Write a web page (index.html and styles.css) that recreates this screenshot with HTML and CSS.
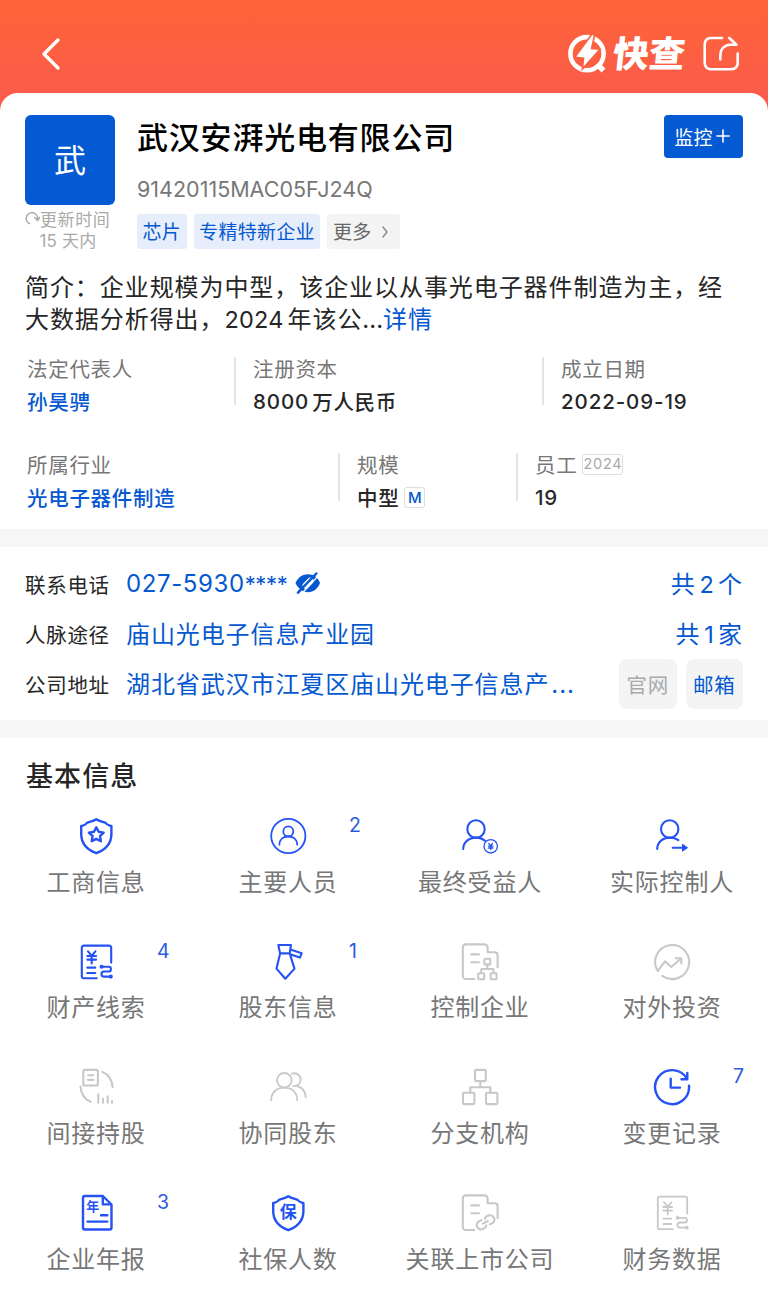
FILE: index.html
```html
<!DOCTYPE html>
<html lang="zh-CN">
<head>
    <meta charset="UTF-8">
    <meta name="viewport" content="width=device-width, initial-scale=1.0">
    <title>武汉安湃光电有限公司</title>
    <link rel="stylesheet" href="styles.css">
</head>
<body>
    <!-- shapes used more than once -->
    <svg class="defs" width="0" height="0">
        <symbol id="shield" viewBox="0 0 40 40">
            <path d="M20.3 3.2C17.5 5.2 14.5 5.6 11 6.8C9.5 9.6 8 9.2 5.2 9.9V18C5.2 27.5 10.5 33.5 20.3 37.2C30.1 33.5 35.4 27.5 35.4 18V9.9C32.6 9.2 31.1 9.6 29.6 6.8C26.1 5.6 23.1 5.2 20.3 3.2Z"/>
        </symbol>
        <symbol id="assets" viewBox="0 0 40 40">
            <path d="M35.2 20.6V5.6a2 2 0 0 0-2-2H7.8a2 2 0 0 0-2 2V34.2a2 2 0 0 0 2 2H20.7M11.3 25.6h8M11.3 31h8"/>
            <path d="M12 9.3l3.7 4.5l3.7-4.5M15.7 13.8V21.5M11.3 14h8.8M11.3 17.6h8.8"/>
            <path d="M25.5 24.8H32.6a2.3 2.3 0 0 1 0 4.7H28a2.5 2.5 0 0 0 0 5.1H35"/>
            <circle cx="25.6" cy="24.8" r="1"/>
            <circle cx="34.8" cy="34.6" r="1"/>
        </symbol>
        <symbol id="doc" viewBox="0 0 40 40">
            <path d="M14.3 37H5.8a3 3 0 0 1-3-3V5.4a3 3 0 0 1 3-3H24.6a3 3 0 0 1 3 3V10.3H34.6a3 3 0 0 1 3 3V25.3M11.3 12.4h7.6M11.3 20.3h7.6"/>
        </symbol>
    </svg>

    <header class="topbar">
        <svg class="back" viewBox="0 0 24 36" width="24" height="36"><path d="M19 4L5 18L19 32"/></svg>
        <div class="brand">
            <svg class="brand-mark" viewBox="0 0 42 42" width="42" height="42">
                <circle cx="20" cy="20.7" r="16.6"/>
                <path class="tail" d="M30 31L36.5 37.5"/>
                <path class="bolt" d="M25 1L7.8 24.3L16.6 25.2L15.4 36L33 16.3L24.6 15.5L27.6 2Z"/>
            </svg>
            <span class="brand-name">快查</span>
            <svg class="share" viewBox="0 0 38 38" width="38" height="38">
                <path d="M20 3H8.7a6 6 0 0 0-6 6V28.3a6 6 0 0 0 6 6H29.7a6 6 0 0 0 6-6V18.5"/>
                <path d="M18.3 24.5V21C18.3 14.5 22 10 28.5 9.7H34.5L27.3 3"/>
            </svg>
        </div>
    </header>

    <section class="company">
        <div class="company-head">
            <div class="logo-col">
                <div class="avatar">武</div>
                <div class="updated">
                    <svg viewBox="0 0 15 15" width="15" height="15"><path d="M4.6 12.6A5.7 5.7 0 1 1 12.6 7.6M9.8 6.6L12.6 9.6L14.6 6.4"/></svg>更新时间
                </div>
                <div class="updated days">15 天内</div>
            </div>
            <div class="name-col">
                <h1>武汉安湃光电有限公司</h1>
                <div class="code">91420115MAC05FJ24Q</div>
                <div class="tags">
                    <span class="tag">芯片</span>
                    <span class="tag">专精特新企业</span>
                    <span class="tag tag-more">更多<svg viewBox="0 0 8 14" width="8" height="14"><path d="M2 2L6 7L2 12"/></svg></span>
                </div>
            </div>
            <button type="button" class="monitor">监控<svg viewBox="0 0 14 14" width="14" height="14"><path d="M7 1v12M1 7h12"/></svg></button>
        </div>

        <p class="intro">简介：企业规模为中型，该企业以从事光电子器件制造为主，经<br>大数据分析得出，<span class="num">2024</span>年该公<span class="dots">...</span><a class="link">详情</a></p>

        <div class="facts facts-first">
            <div class="fact">
                <div class="label">法定代表人</div>
                <div class="value link">孙昊骋</div>
            </div>
            <div class="fact">
                <div class="label">注册资本</div>
                <div class="value"><span class="amount">8000</span>万人民币</div>
            </div>
            <div class="fact">
                <div class="label">成立日期</div>
                <div class="value date">2022-09-19</div>
            </div>
        </div>
        <div class="facts facts-second">
            <div class="fact">
                <div class="label">所属行业</div>
                <div class="value link">光电子器件制造</div>
            </div>
            <div class="fact">
                <div class="label">规模</div>
                <div class="value">中型<span class="mark size">M</span></div>
            </div>
            <div class="fact">
                <div class="label">员工<span class="mark year">2024</span></div>
                <div class="value">19</div>
            </div>
        </div>
    </section>

    <section class="contact">
        <div class="contact-row">
            <span class="contact-label">联系电话</span>
            <span class="contact-value phone">027-5930<span class="masked">****</span></span>
            <svg class="eye" viewBox="0 0 26 24" width="26" height="24">
                <path d="M.5 11C3 5.500 7.500 2.200 13 2.200S23 5.500 25 11C23 16.500 18.500 20.200 13 20.200S3 16.500 .5 11Z"/>
                <path class="pupil" d="M10.800 13.600L15.200 9"/>
                <path class="gap" d="M5.500 23L23.500 3.500"/>
                <path class="slash" d="M3 20.700L21.300 1.500"/>
            </svg>
            <span class="total">共<span class="num">2</span>个</span>
        </div>
        <div class="contact-row">
            <span class="contact-label">人脉途径</span>
            <span class="contact-value">庙山光电子信息产业园</span>
            <span class="total">共<span class="num">1</span>家</span>
        </div>
        <div class="contact-row">
            <span class="contact-label">公司地址</span>
            <span class="contact-value">湖北省武汉市江夏区庙山光电子信息产<span class="more-dots">...</span></span>
            <div class="contact-buttons">
                <button type="button" disabled>官网</button>
                <button type="button">邮箱</button>
            </div>
        </div>
    </section>

    <section class="basic">
        <h2>基本信息</h2>
        <div class="menu">
            <div class="item">
                <svg class="icon bold" viewBox="0 0 40 40"><use href="#shield"/><path d="M20.3 11.200L22.600 15.800L27.700 16.600L24 20.200L24.900 25.300L20.300 22.900L15.700 25.300L16.600 20.200L12.900 16.600L18 15.800Z"/></svg>
                <span class="item-name">工商信息</span>
            </div>
            <div class="item">
                <svg class="icon thin" viewBox="0 0 40 40"><circle cx="20.3" cy="20" r="17.100"/><circle cx="20.300" cy="15.400" r="5"/><path d="M11.400 28.700C11.400 23.500 15 20.500 20.300 20.500S29.200 23.500 29.200 28.700"/></svg>
                <span class="item-name">主要人员</span>
                <span class="count">2</span>
            </div>
            <div class="item">
                <svg class="icon" viewBox="0 0 40 40"><circle cx="16" cy="13" r="8.700"/><path d="M3.200 33C3.200 26.500 8.500 21.600 16 21.600C19.500 21.600 22.500 22.600 25 24.800"/><circle class="hair" cx="30.700" cy="30.300" r="6.700"/><path class="hair" d="M28.800 27.400L30.700 30L32.600 27.400M30.700 30V33.600M28.500 30.200H32.900M28.500 32H32.900"/></svg>
                <span class="item-name">最终受益人</span>
            </div>
            <div class="item">
                <svg class="icon" viewBox="0 0 40 40"><circle cx="17.700" cy="13" r="8.700"/><path d="M5.200 33C5.200 26.500 10.500 21.600 17.700 21.600C21 21.600 24 22.400 26.400 24.200M20.700 31.700H31"/><path class="solid" d="M30.800 28.500L35.500 31.700L30.800 34.900Z"/></svg>
                <span class="item-name">实际控制人</span>
            </div>

            <div class="item">
                <svg class="icon" viewBox="0 0 40 40"><use href="#assets"/></svg>
                <span class="item-name">财产线索</span>
                <span class="count">4</span>
            </div>
            <div class="item">
                <svg class="icon" viewBox="0 0 40 40"><path d="M10.300 3H23L21.700 11.400H12.100ZM12.100 11.400L8.500 26.600L17.300 36.700L26.500 26.600L21.700 11.400M22.400 7.600L33.700 11.200L31.900 15.600L22 12.200"/></svg>
                <span class="item-name">股东信息</span>
                <span class="count">1</span>
            </div>
            <div class="item off">
                <svg class="icon" viewBox="0 0 40 40"><use href="#doc"/><rect x="24.400" y="16.800" width="5.800" height="5.800" rx=".8"/><path d="M27.300 22.600V27M21.200 31V28a1 1 0 0 1 1-1H32.600a1 1 0 0 1 1 1V31"/><rect x="18.200" y="31.200" width="6" height="6" rx=".8"/><rect x="30.600" y="31.200" width="6" height="6" rx=".8"/></svg>
                <span class="item-name">控制企业</span>
            </div>
            <div class="item off">
                <svg class="icon" viewBox="0 0 40 40"><path d="M10.300 33.900A17 17 0 1 0 5.700 29L13 19.300L19.300 25L29 16.500M23.700 16.300H29.300V21.500"/></svg>
                <span class="item-name">对外投资</span>
            </div>

            <div class="item off">
                <svg class="icon" viewBox="0 0 40 40"><rect x="7.300" y="2.900" width="14.600" height="15.600" rx="1.500"/><path d="M12 8.300H17.300M12 12.900H17.300M26.300 4.900C32 7.200 36 13 36.700 20.300M4.500 19.600C5 26.500 8.500 32.200 14.500 34.800M22.300 27.200V35.700M27 31.500V35.700M31.700 29.200V35.700M36 34V35.700"/></svg>
                <span class="item-name">间接持股</span>
            </div>
            <div class="item off">
                <svg class="icon thin" viewBox="0 0 40 40"><circle cx="16.300" cy="13.300" r="7.300"/><path d="M3.200 33.300C3.200 25.500 8.500 20.600 16.300 20.600S29.300 25.500 29.300 33.300M23.700 6.600C28.500 5.300 32.700 8.300 32.700 12.600C32.700 16.500 29.700 19 25.300 19.100M29 19.200C34 20.500 37.500 24.500 37.700 30"/></svg>
                <span class="item-name">协同股东</span>
            </div>
            <div class="item off">
                <svg class="icon" viewBox="0 0 40 40"><rect x="15" y="2.900" width="10.800" height="11.200" rx="1"/><rect x="3" y="25.800" width="11.400" height="11.300" rx="1"/><rect x="26" y="25.800" width="11.400" height="11.300" rx="1"/><path d="M20.300 14V20.300M10.300 25.600V20.300H30.300V25.600"/></svg>
                <span class="item-name">分支机构</span>
            </div>
            <div class="item">
                <svg class="icon bold" viewBox="0 0 40 40"><path d="M37 18.600A17 17 0 1 1 34.600 11.300M35.300 6V12.300H29.500M18.700 11.600V20.600H28"/></svg>
                <span class="item-name">变更记录</span>
                <span class="count">7</span>
            </div>

            <div class="item">
                <svg class="icon bold" viewBox="0 0 40 40"><path d="M26.800 3H9a2 2 0 0 0-2 2V34.500a2 2 0 0 0 2 2H33.500a2 2 0 0 0 2-2V11.500L26.800 3V11.400H35.500M25 22.300H31.300M11.500 28.600H31.300"/><text x="16.800" y="18.400" font-size="13">年</text></svg>
                <span class="item-name">企业年报</span>
                <span class="count">3</span>
            </div>
            <div class="item">
                <svg class="icon bold" viewBox="0 0 40 40"><use href="#shield"/><text x="20.300" y="25.200" font-size="17">保</text></svg>
                <span class="item-name">社保人数</span>
            </div>
            <div class="item off">
                <svg class="icon" viewBox="0 0 40 40"><use href="#doc"/><path d="M21.500 27.200L19.500 28A4.300 4.300 0 0 0 22.500 36.100C24.500 35.500 26 34.700 26.200 32.400M24.800 25.700C25.200 23.500 27 23 28.600 22.500A4.300 4.300 0 0 1 31.600 30.600L29.800 31.300M22.800 30.600L27.800 28"/></svg>
                <span class="item-name">关联上市公司</span>
            </div>
            <div class="item off">
                <svg class="icon thin" viewBox="0 0 40 40"><use href="#assets"/></svg>
                <span class="item-name">财务数据</span>
            </div>
        </div>
    </section>
</body>
</html>
```

FILE: styles.css
```css
* {
    box-sizing: border-box;
}

body {
    margin: 0;
    background: #f6f6f6;
    font-family: Inter, "Noto Sans CJK SC", sans-serif;
    color: #262626;
    letter-spacing: 0.8px;
}

svg {
    fill: none;
    stroke: currentColor;
    stroke-linecap: round;
    stroke-linejoin: round;
    flex-shrink: 0;
}

h1, h2, p {
    margin: 0;
}

button {
    border: none;
    padding: 0;
    font-family: inherit;
    letter-spacing: inherit;
    cursor: pointer;
}

.defs {
    display: block;
}

.link {
    color: #0558cf;
}

/* top bar */
.topbar {
    height: 120px;
    padding: 0 28px 12px 39px;
    display: flex;
    align-items: center;
    justify-content: space-between;
    background: linear-gradient(#ff6438, #fa5c49 90px);
    color: #fff;
}

.back {
    stroke-width: 3.4;
}

.brand {
    display: flex;
    align-items: center;
}

.brand-mark {
    stroke-width: 4.6;
}

.brand-mark .tail {
    stroke-width: 5.5;
    stroke-linecap: butt;
}

.brand-mark .bolt {
    fill: #fff;
    stroke: #fb6040;
    stroke-width: 1.6;
    stroke-linejoin: miter;
}

.brand-name {
    margin: 0 17px 0 4px;
    font-size: 36px;
    font-weight: 900;
    line-height: 40px;
    letter-spacing: 0;
    transform: skewX(-6deg);
}

.share {
    stroke-width: 2.6;
}

/* company card */
.company {
    height: 436px;
    margin-top: -27px;
    padding: 22px 25px 0;
    background: #fff;
    border-radius: 18px 18px 0 0;
}

.company-head {
    display: flex;
    height: 136px;
}

.logo-col {
    width: 90px;
    margin-right: 22px;
}

.avatar {
    height: 90px;
    border-radius: 6px;
    background: #045ad2;
    color: #fff;
    font-size: 32px;
    line-height: 91px;
    text-align: center;
    letter-spacing: 0;
}

.updated {
    display: flex;
    align-items: center;
    height: 21px;
    margin-top: 3px;
    color: #aaa;
    font-size: 17px;
    letter-spacing: 0.6px;
    white-space: nowrap;
}

.updated svg {
    stroke-width: 1.5;
}

.days {
    justify-content: center;
    margin: 0 4px 0 0;
    letter-spacing: 0.2px;
}

.name-col {
    flex: 1;
}

h1 {
    height: 46px;
    color: #000;
    font-size: 31px;
    font-weight: 500;
    line-height: 46px;
}

.code {
    height: 53px;
    color: #777;
    font-size: 21.5px;
    line-height: 57px;
    letter-spacing: 0;
}

.tags {
    display: flex;
    gap: 7px;
}

.tag {
    display: flex;
    align-items: center;
    height: 35px;
    padding: 0 5.5px 2px;
    border-radius: 3px;
    background: #e6eefb;
    color: #0558cf;
    font-size: 19px;
    letter-spacing: 0.3px;
}

.tag-more {
    background: #f4f4f4;
    color: #666;
}

.tag-more svg {
    margin: 2px 6px 0 9px;
    stroke: #888;
    stroke-width: 1.4;
}

.monitor {
    display: flex;
    align-items: center;
    justify-content: center;
    gap: 3px;
    width: 79px;
    height: 43px;
    padding: 0 3px 1px 0;
    border-radius: 4px;
    background: #045ad2;
    color: #fff;
    font-size: 19px;
    letter-spacing: 0.3px;
}

.monitor svg {
    stroke-width: 1.6;
}

.intro {
    height: 88px;
    padding-top: 21px;
    font-size: 24px;
    line-height: 32px;
    letter-spacing: 0.93px;
    white-space: nowrap;
}

.num {
    margin-right: 4px;
    font-size: 23.5px;
    letter-spacing: 0.2px;
}

.dots {
    letter-spacing: 0;
}

.more-dots {
    margin-left: 2px;
}

.facts {
    display: grid;
    height: 96px;
    padding-left: 2px;
}

.facts-first {
    grid-template-columns: 207px 308px 1fr;
    padding-top: 18px;
}

.facts-second {
    grid-template-columns: 311px 178px 1fr;
    padding-top: 18px;
}

.fact {
    height: 48px;
}

.fact + .fact {
    border-left: 2px solid #e4e4e4;
    padding-left: 17px;
}

.label {
    display: flex;
    align-items: center;
    height: 22px;
    color: #777;
    font-size: 20.5px;
    letter-spacing: 0.7px;
}

.value {
    display: flex;
    align-items: center;
    height: 44px;
    font-size: 20.5px;
    font-weight: 500;
    letter-spacing: 0.7px;
}

.amount {
    margin-right: 3px;
    letter-spacing: 0.9px;
}

.date {
    letter-spacing: 0.9px;
}

.mark {
    display: flex;
    align-items: center;
    justify-content: center;
    height: 21px;
    margin-left: 5px;
    border: 1px solid #ddd;
    border-radius: 3px;
    font-size: 15px;
    line-height: 1;
}

.size {
    width: 21px;
    color: #0558cf;
    letter-spacing: 0;
}

.year {
    width: 41px;
    color: #aaa;
    font-size: 14.5px;
}

/* contact */
.contact {
    height: 173px;
    margin-top: 18px;
    padding: 12px 25px 0;
    background: #fff;
}

.contact-row {
    display: flex;
    align-items: center;
    height: 50px;
    white-space: nowrap;
}

.contact-label {
    width: 101px;
    padding-bottom: 1px;
    font-size: 20.5px;
    letter-spacing: 0.7px;
}

.contact-value,
.total {
    padding-bottom: 3px;
    color: #0558cf;
    font-size: 24px;
    letter-spacing: 0.9px;
}

.phone {
    padding-bottom: 1px;
    letter-spacing: 0.6px;
}

.masked {
    font-size: 22px;
    letter-spacing: -0.3px;
}

.total {
    margin-left: auto;
}

.total .num {
    margin: 0 4px;
}

.eye {
    margin-left: 7px;
    color: #0558cf;
    stroke-width: 0;
    fill: currentColor;
}

.eye .pupil {
    stroke: #fff;
    stroke-width: 6.5;
}

.eye .gap {
    stroke: #fff;
    stroke-width: 1.2;
}

.eye .slash {
    stroke: currentColor;
    stroke-width: 2.5;
}

.contact-buttons {
    display: flex;
    gap: 9px;
    margin-left: auto;
}

.contact-buttons button {
    width: 57.5px;
    height: 50px;
    border-radius: 8px;
    background: #f4f4f4;
    color: #0558cf;
    font-size: 20.5px;
}

.contact-buttons button:disabled {
    color: #aaa;
}

/* basic info */
.basic {
    height: 578px;
    margin-top: 18px;
    padding-top: 20px;
    background: #fff;
}

h2 {
    padding-left: 26px;
    font-size: 27px;
    font-weight: 500;
    line-height: 38px;
    letter-spacing: 1.1px;
}

.menu {
    display: grid;
    grid-template-columns: repeat(4, 192px);
    grid-auto-rows: 125.7px;
    padding-top: 20px;
}

.item {
    position: relative;
    display: flex;
    flex-direction: column;
    align-items: center;
}

.icon {
    width: 40px;
    height: 40px;
    color: #2452f5;
    stroke-width: 2.1;
}

.icon.bold {
    stroke-width: 2.4;
}

.icon.thin {
    stroke-width: 1.8;
}

.icon .hair {
    stroke-width: 1.3;
}

.icon .solid {
    fill: currentColor;
    stroke-width: 1;
}

.icon text {
    fill: currentColor;
    stroke: none;
    font-family: "Noto Sans CJK SC", sans-serif;
    font-weight: 700;
    letter-spacing: 0;
    text-anchor: middle;
}

.off .icon {
    color: #c8c8c8;
}

.item-name {
    margin-top: 8.5px;
    color: #777;
    font-size: 24px;
    line-height: 36px;
}

.count {
    position: absolute;
    left: 157px;
    top: -3px;
    color: #2c5ae0;
    font-size: 19.5px;
    line-height: 24px;
}
```
